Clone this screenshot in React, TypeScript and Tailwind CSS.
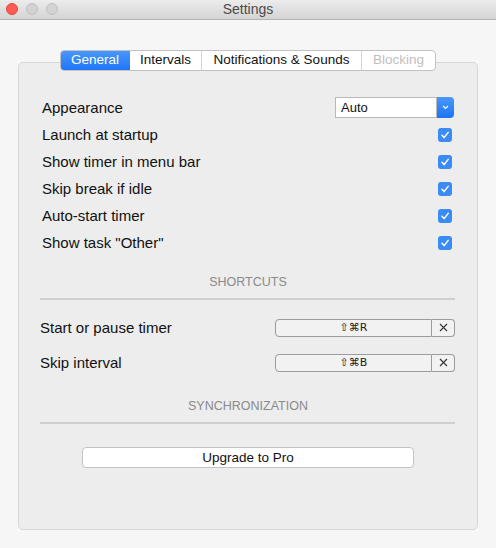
import React from "react";

const font = { fontFamily: '"Liberation Sans", Arial, sans-serif' };

function Check() {
  return (
    <div className="w-[14px] h-[14px] rounded-[3px] bg-[#3b8bf6] flex items-center justify-center">
      <svg width="10" height="10" viewBox="0 0 10 10">
        <path d="M2 5.3 L4.1 7.6 L8.2 2.4" stroke="white" strokeWidth="1.5" fill="none" strokeLinecap="round" strokeLinejoin="round" />
      </svg>
    </div>
  );
}

function Row({ label, children }: { label: string; children: React.ReactNode }) {
  return (
    <div className="h-[27px] flex items-center justify-between pl-[23px] pr-[25px] text-[15px] leading-[27px] text-[#111]">
      <span>{label}</span>
      {children}
    </div>
  );
}

function SectionHead({ title }: { title: string }) {
  return (
    <>
      <div className="h-[20px] leading-[20px] text-center text-[12.5px] text-[#8a8a8a]">{title}</div>
      <div className="mt-[6px] ml-[21px] mr-[22px] h-[2px] bg-[#cfcfcf]" />
    </>
  );
}

function Shortcut({ label, keys }: { label: string; keys: string }) {
  return (
    <div className="h-[35px] flex items-center justify-between pl-[21px] pr-[22px] text-[15px] leading-[35px] text-[#111]">
      <span>{label}</span>
      <div className="flex h-[18px]">
        <div
          className="w-[157px] h-[18px] border border-[#9c9c9c] rounded-l-[4px] bg-[#f2f2f2] flex items-center justify-center text-[11px] text-[#222]"
          style={{ fontFamily: '"DejaVu Sans", "Liberation Sans", sans-serif' }}
        >
          {keys}
        </div>
        <div className="w-[23px] h-[18px] border border-l-0 border-[#9c9c9c] rounded-r-[4px] bg-[#f2f2f2] flex items-center justify-center">
          <svg width="9" height="9" viewBox="0 0 9 9">
            <path d="M1 1 L8 8 M8 1 L1 8" stroke="#333" strokeWidth="1.1" />
          </svg>
        </div>
      </div>
    </div>
  );
}

export default function App() {
  return (
    <div className="w-[496px] h-[548px] bg-[#f6f6f6] flex flex-col overflow-hidden" style={font}>
      <div className="h-[20px] shrink-0 relative bg-gradient-to-b from-[#ececec] to-[#d4d4d4] border-b border-[#b4b4b4] flex items-center justify-center">
        <div className="absolute left-[6px] top-[3px] flex gap-[8px]">
          <div className="w-[12px] h-[12px] rounded-full bg-[#fd5c55] border border-[#e1453e]" />
          <div className="w-[12px] h-[12px] rounded-full bg-[#d3d3d3] border border-[#c0c0c0]" />
          <div className="w-[12px] h-[12px] rounded-full bg-[#d3d3d3] border border-[#c0c0c0]" />
        </div>
        <span className="text-[14px] text-[#4b4b4b] leading-[19px]">Settings</span>
      </div>

      <div className="relative mt-[42px] mx-[18px] h-[468px] bg-[#ededed] border border-[#d7d7d7] rounded-[5px]">
        <div className="absolute top-[-13px] left-0 right-0 flex justify-center">
          <div className="flex h-[21px] border border-[#c2c2c2] rounded-[4px] bg-white text-[13.5px] overflow-hidden">
            <div className="w-[70px] flex items-center justify-center text-white bg-gradient-to-b from-[#4a98fb] to-[#1c74f5] -my-px -ml-px h-[21px] rounded-l-[4px]">General</div>
            <div className="w-[72px] flex items-center justify-center text-[#111] border-r border-[#d4d4d4]">Intervals</div>
            <div className="w-[160px] flex items-center justify-center text-[#111] border-r border-[#d4d4d4]">Notifications &amp; Sounds</div>
            <div className="w-[73px] flex items-center justify-center text-[#c0c0c0]">Blocking</div>
          </div>
        </div>

        <div className="pt-[31px]">
          <Row label="Appearance">
            <div className="flex h-[21px] -mr-[2px]">
              <div className="w-[102px] h-[21px] bg-white border border-[#b9b9b9] flex items-center pl-[5px] text-[13px] text-[#111]">Auto</div>
              <div className="w-[17px] h-[21px] rounded-r-[4px] bg-gradient-to-b from-[#4a98fb] to-[#1c74f5] flex items-center justify-center">
                <svg width="7" height="5" viewBox="0 0 7 5">
                  <path d="M1 1 L3.5 3.5 L6 1" stroke="white" strokeWidth="1.2" fill="none" />
                </svg>
              </div>
            </div>
          </Row>
          <Row label="Launch at startup"><Check /></Row>
          <Row label="Show timer in menu bar"><Check /></Row>
          <Row label="Skip break if idle"><Check /></Row>
          <Row label="Auto-start timer"><Check /></Row>
          <Row label={'Show task "Other"'}><Check /></Row>
        </div>

        <div className="mt-[16px]">
          <SectionHead title="SHORTCUTS" />
        </div>
        <div className="mt-[10px]">
          <Shortcut label="Start or pause timer" keys="⇧⌘R" />
          <Shortcut label="Skip interval" keys="⇧⌘B" />
        </div>

        <div className="mt-[16px]">
          <SectionHead title="SYNCHRONIZATION" />
        </div>
        <div className="mt-[23px] flex justify-center">
          <button className="w-[332px] h-[21px] bg-white border border-[#c3c3c3] rounded-[4px] text-[13.5px] text-[#111] leading-[19px]">Upgrade to Pro</button>
        </div>
      </div>
    </div>
  );
}
